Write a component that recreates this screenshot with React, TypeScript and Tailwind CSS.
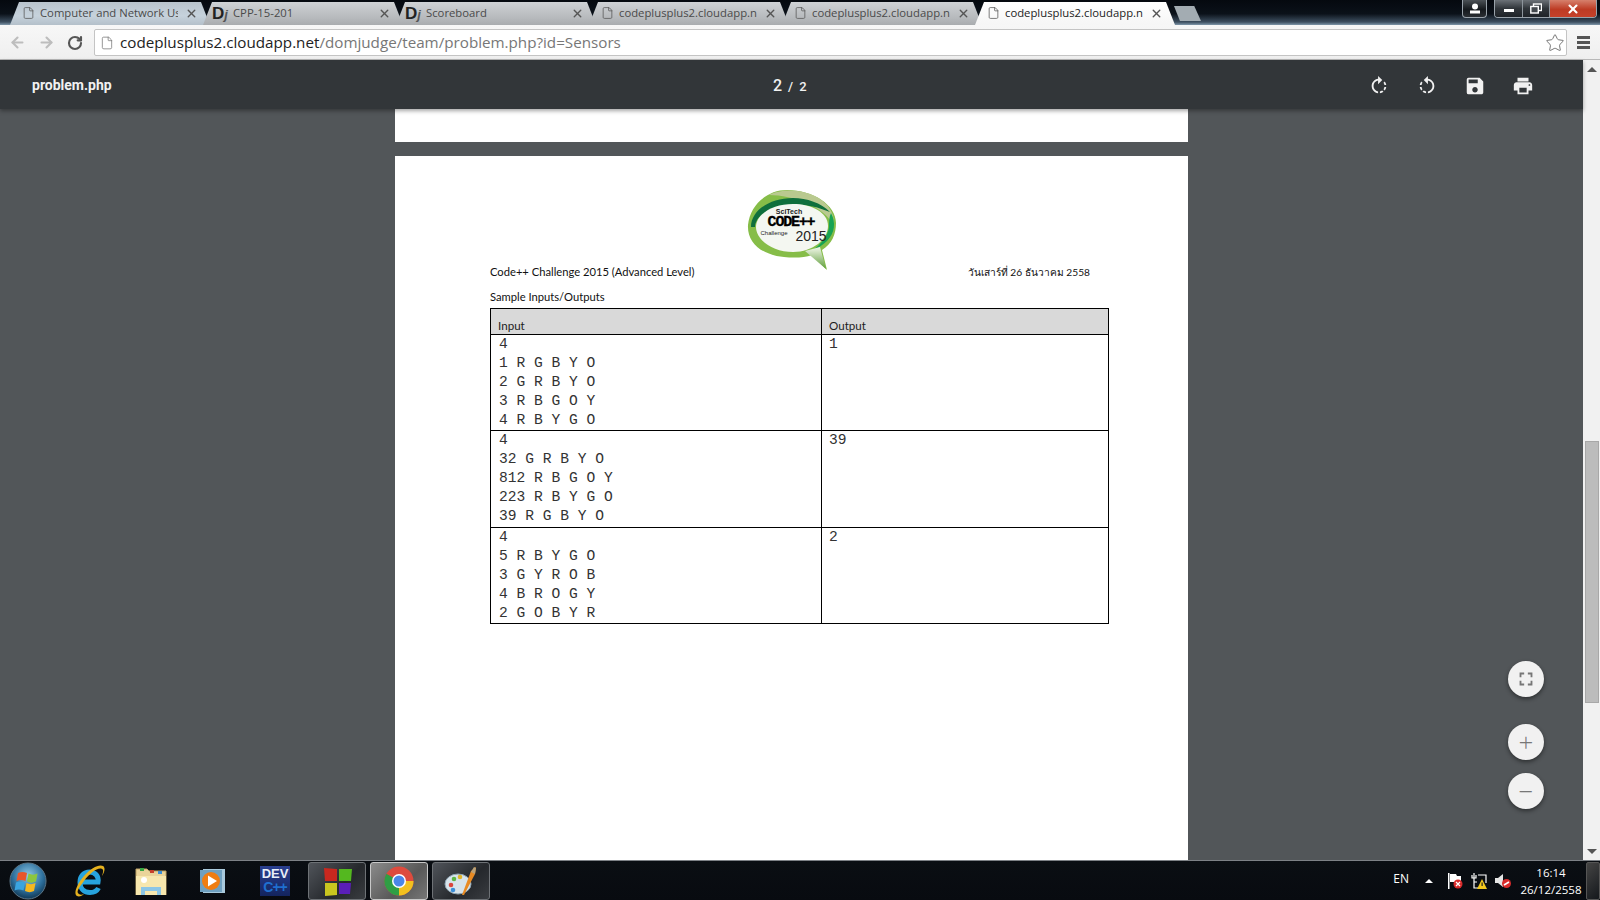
import { ArrowLeft, ArrowRight, File, RotateCw, Star, X } from "lucide-react";
import { MdFullscreen, MdPrint, MdRotateLeft, MdRotateRight, MdSave } from "react-icons/md";

const tabs = [
  { title: "Computer and Network Us", icon: "doc", state: "glass" },
  { title: "CPP-15-201", icon: "dj", state: "idle" },
  { title: "Scoreboard", icon: "dj", state: "idle" },
  { title: "codeplusplus2.cloudapp.ne", icon: "doc", state: "idle" },
  { title: "codeplusplus2.cloudapp.ne", icon: "doc", state: "idle" },
  { title: "codeplusplus2.cloudapp.ne", icon: "doc", state: "active" },
];

const samples = [
  {
    input: ["4", "1 R G B Y O", "2 G R B Y O", "3 R B G O Y", "4 R B Y G O"],
    output: "1",
    height: "h-[96px]",
  },
  {
    input: ["4", "32 G R B Y O", "812 R B G O Y", "223 R B Y G O", "39 R G B Y O"],
    output: "39",
    height: "h-[97px]",
  },
  {
    input: ["4", "5 R B Y G O", "3 G Y R O B", "4 B R O G Y", "2 G O B Y R"],
    output: "2",
    height: "h-[95px]",
  },
];

function Tab({ title, icon, state }: { title: string; icon: string; state: string }) {
  const bg =
    state === "active"
      ? "bg-[linear-gradient(#ffffff,#f6f6f6)] z-10"
      : state === "glass"
        ? "bg-[linear-gradient(#b9c4cd,#c6d2dc_60%,#b4c0ca)]"
        : "bg-[linear-gradient(#cfd2d5,#b6b9bc_70%,#a9acaf)]";
  return (
    <div
      className={`-mr-[7px] flex h-[23px] w-[200px] shrink-0 items-center pb-[1px] pl-[13px] pr-[12px] [clip-path:polygon(0_100%,9px_0,calc(100%_-_9px)_0,100%_100%)] ${bg}`}
    >
      {icon === "doc" ? (
        <File className="ml-[-1px] mr-[5px] h-[14px] w-[13px] shrink-0 text-[#555]" strokeWidth={1.4} />
      ) : (
        <span className="ml-[-4px] mr-[3px] w-[18px] shrink-0 font-['Liberation_Sans',sans-serif] text-[17px] font-bold leading-none text-[#222]">
          D<span className="text-[13px] italic text-[#555]">j</span>
        </span>
      )}
      <span
        className={`w-[138px] overflow-hidden whitespace-nowrap text-[11.3px] ${state === "active" ? "text-[#222]" : "text-[#4a4a4a]"}`}
      >
        {title}
      </span>
      <X className="ml-auto h-[13px] w-[13px] shrink-0 text-[#555]" strokeWidth={2.6} />
    </div>
  );
}

function WindowControls() {
  return (
    <div className="ml-auto flex items-start">
      <div className="flex h-[18px] w-[25px] items-center justify-center rounded-b-[4px] border border-t-0 border-[#9aa3ab] bg-[linear-gradient(#4b5156,#15191d_55%,#2a2e33)]">
        <svg width="12" height="11" viewBox="0 0 12 11">
          <circle cx="6" cy="3.5" r="3" fill="#fff" />
          <rect x="1" y="7.5" width="10" height="3" fill="#fff" />
        </svg>
      </div>
      <div className="ml-[7px] flex h-[18px] w-[103px] overflow-hidden rounded-b-[4px] border border-t-0 border-[#9aa3ab]">
        <div className="flex w-[28px] items-center justify-center border-r border-[#8d959c] bg-[linear-gradient(#6b7177,#30353a_50%,#1f2328)]">
          <div className="mt-[3px] h-[3px] w-[10px] bg-white" />
        </div>
        <div className="flex w-[27px] items-center justify-center border-r border-[#8d959c] bg-[linear-gradient(#6b7177,#30353a_50%,#1f2328)]">
          <svg width="12" height="11" viewBox="0 0 12 11" fill="none" stroke="#fff" strokeWidth="1.4">
            <rect x="3.5" y="1" width="8" height="6.5" />
            <rect x="0.8" y="3.5" width="7.5" height="6.5" fill="#43484d" />
          </svg>
        </div>
        <div className="flex flex-1 items-center justify-center bg-[linear-gradient(#d6806c,#bd3b24_55%,#c6412a)]">
          <X className="h-[14px] w-[14px] text-white" strokeWidth={3.6} />
        </div>
      </div>
    </div>
  );
}

function CodeLogo() {
  return (
    <svg width="90" height="82" viewBox="0 0 90 82" className="ml-[352px] block">
      <defs>
        <linearGradient id="bubbleTail" x1="0" y1="0" x2="0" y2="1">
          <stop offset="0%" stopColor="#f2f7ea" />
          <stop offset="100%" stopColor="#5f9e3a" />
        </linearGradient>
      </defs>
      <path d="M40 1C20 1 3 16 1 36c-1 18 14 30 36 32 9 1 20 1 28-2l15 15-5-20c10-6 14-16 14-27C89 16 66 1 40 1Z" fill="#86bd48" />
      <path d="M22 6C36-2 66 0 80 16c5 6 8 13 6 20C78 18 46 6 22 6Z" fill="#b9c98f" />
      <path d="M4 38C4 22 22 9 46 9c14 0 28 5 37 14-14-6-30-9-44-7C22 18 8 28 8 38Z" fill="#0f6f3c" />
      <path d="M84 24c5 9 4 20-4 28-4 4-9 7-14 9 8-6 15-14 16-23 0-5 0-10 2-14Z" fill="#17a354" />
      <path d="M9 38C9 25 26 15 46 15c18 0 35 8 35 22 0 13-15 26-35 26C26 63 9 51 9 38Z" fill="#f4f7f1" />
      <path d="M58 62l21 18-6-22Z" fill="url(#bubbleTail)" />
      <text x="42" y="25" textAnchor="middle" className="font-['Liberation_Sans',sans-serif] text-[7px] font-bold" fill="#222">SciTech</text>
      <text x="44" y="37" textAnchor="middle" className="font-['Liberation_Mono',monospace] text-[15px] font-bold tracking-[-1.2px]" fill="#000" stroke="#000" strokeWidth="0.3">CODE++</text>
      <text x="27" y="46" textAnchor="middle" className="font-['Liberation_Sans',sans-serif] text-[6px]" fill="#222">Challenge</text>
      <text x="64" y="52" textAnchor="middle" className="font-['Liberation_Sans',sans-serif] text-[14px]" fill="#222">2015</text>
    </svg>
  );
}

function SampleTable() {
  return (
    <div className="ml-[95px] mt-[2px] w-[619px] border border-black text-[#1d1d1d]">
      <div className="flex h-[26px] border-b border-black bg-[#d9d9d9] text-[11.6px] leading-[13px]">
        <div className="flex w-[331px] items-end border-r border-black pb-[2px] pl-[7px]">Input</div>
        <div className="flex flex-1 items-end pb-[2px] pl-[7px]">Output</div>
      </div>
      {samples.map((s, i) => (
        <div
          key={i}
          className={`flex font-['Liberation_Mono',monospace] text-[14.6px] leading-[19px] text-[#333] ${s.height} ${i < 2 ? "border-b border-black" : ""}`}
        >
          <div className="w-[331px] whitespace-pre border-r border-black pl-[8px]">
            {s.input.map((line, j) => (
              <div key={j}>{line}</div>
            ))}
          </div>
          <div className="flex-1 pl-[7px]">{s.output}</div>
        </div>
      ))}
    </div>
  );
}

function FloatButton({ children, className }: { children: React.ReactNode; className?: string }) {
  return (
    <div className={`flex h-[36px] w-[36px] items-center justify-center rounded-full bg-[#f1f1f1] text-[#777] shadow-[0_2px_4px_rgba(0,0,0,0.45)] ${className ?? ""}`}>
      {children}
    </div>
  );
}

function StartOrb() {
  return (
    <svg width="38" height="38" viewBox="0 0 38 38">
      <defs>
        <radialGradient id="orb" cx="50%" cy="35%" r="70%">
          <stop offset="0%" stopColor="#8fc8e6" />
          <stop offset="60%" stopColor="#2d6f9c" />
          <stop offset="100%" stopColor="#0b2c45" />
        </radialGradient>
      </defs>
      <circle cx="19" cy="19" r="18" fill="url(#orb)" stroke="#5d7687" />
      <path d="M9 11c3-1.500 6-1.500 9 0l-1.500 8c-3-1.500-6-1.500-9 0Z" fill="#e8552b" />
      <path d="M19.500 11.500c3 1.500 6 1.500 9 0l-1.500 8c-3 1.500-6 1.500-9 0Z" fill="#8cc63f" />
      <path d="M7 20.500c3-1.500 6-1.500 9 0l-1.500 8c-3-1.500-6-1.500-9 0Z" fill="#3aa4e0" />
      <path d="M17.500 21c3 1.500 6 1.500 9 0l-1.500 8c-3 1.500-6 1.500-9 0Z" fill="#f6b81f" />
    </svg>
  );
}

function ExplorerIcon() {
  return (
    <svg width="32" height="34" viewBox="0 0 32 34" fill="none">
      <path d="M7 18h17c1-6-3-10-8.500-10S6 12 6 18c0 7 4.500 10.500 10 10.500 4 0 7-1.500 8.500-4.500" stroke="#27a3de" strokeWidth="5" />
      <path d="M3 32C-1 30 3 20 10 12S25 0 29 2c3 2 1 7-1 10 1-4 2-6 0-7C24 3 16 9 10 17S2 28 5 30c1 1 3 1 5 0-2 2-5 3-7 2Z" fill="#e5b11f" />
    </svg>
  );
}

function FolderIcon() {
  return (
    <svg width="32" height="28" viewBox="0 0 32 28">
      <path d="M1 2h11l2 2h17v24H1Z" fill="#ead49a" stroke="#bda267" />
      <rect x="5" y="1" width="4" height="3" fill="#39a845" />
      <rect x="15" y="3" width="4" height="3" fill="#c8402c" />
      <rect x="23" y="4" width="4" height="3" fill="#3c8fd8" />
      <rect x="1" y="9" width="30" height="19" fill="#f7e7ae" />
      <path d="M6 28v-8h20v8h-4v-4H10v4Z" fill="#8cc6e6" />
      <circle cx="9" cy="13" r="3" fill="#fff" />
    </svg>
  );
}

function MediaIcon() {
  return (
    <svg width="27" height="26" viewBox="0 0 27 26">
      <rect x="4" y="1" width="22" height="24" fill="#a9c9dc" />
      <rect x="1" y="2" width="22" height="22" fill="#6fa0c0" />
      <circle cx="12" cy="13" r="9" fill="#ef7d12" />
      <path d="M9 7.500v11l9-5.500Z" fill="#fff" />
    </svg>
  );
}

function DevIcon() {
  return (
    <div className="flex h-[30px] w-[30px] flex-col items-center justify-center bg-[linear-gradient(#2a3f8f,#13245e)] font-['Liberation_Sans',sans-serif] font-bold leading-none">
      <span className="text-[13px] text-[#e8eef7]">DEV</span>
      <span className="text-[14px] tracking-[-1px] text-[#1f6fd0]">C++</span>
    </div>
  );
}

function TileIcon() {
  return (
    <svg width="30" height="30" viewBox="0 0 30 30">
      <path d="M2 2l13 1v12H3Z" fill="#c8281f" />
      <path d="M17 3h13l-1 12H17Z" fill="#54b81f" />
      <path d="M3 17h12v12l-12 1Z" fill="#c9c51f" />
      <path d="M17 17h12l-1 11H17Z" fill="#5a1fb8" />
    </svg>
  );
}

function ChromeIcon() {
  return (
    <svg width="30" height="30" viewBox="0 0 30 30">
      <circle cx="15" cy="15" r="14.500" fill="#dd4b3e" />
      <path d="M15 15 2.400 7.700A14.500 14.500 0 0 0 15 29.500Z" fill="#2f9e44" />
      <path d="M15 15h14.500A14.500 14.500 0 0 1 15 29.500Z" fill="#f2c01e" />
      <circle cx="15" cy="15" r="7" fill="#fff" />
      <circle cx="15" cy="15" r="5.500" fill="#4a86e8" />
    </svg>
  );
}

function PaletteIcon() {
  return (
    <svg width="34" height="32" viewBox="0 0 34 32">
      <ellipse cx="14" cy="19" rx="13" ry="10" fill="#d7e3ea" stroke="#8ea4b2" />
      <circle cx="7" cy="20" r="2.300" fill="#d9463c" />
      <circle cx="10" cy="14" r="2.300" fill="#5cb645" />
      <circle cx="16" cy="12" r="2.300" fill="#e0b52b" />
      <circle cx="9" cy="25" r="2.300" fill="#3b8ed8" />
      <path d="M27 6 32 2 31 9 20 30 18 30Z" fill="#e88a22" />
      <path d="M27 7l3-5 2 1-1 6Z" fill="#b9a27a" />
    </svg>
  );
}

function TaskButton({ children, active }: { children: React.ReactNode; active?: boolean }) {
  return (
    <div
      className={`flex h-[38px] w-[58px] items-center justify-center rounded-[3px] border ${
        active
          ? "border-[#c8c8c8] bg-[linear-gradient(135deg,#8b8b8b,#585858_60%,#777)]"
          : "border-[#6e7276] bg-[linear-gradient(135deg,#50545a,#25282c_60%,#393c40)]"
      }`}
    >
      {children}
    </div>
  );
}

function TrayIcons() {
  return (
    <div className="flex items-center gap-[8px]">
      <svg width="16" height="16" viewBox="0 0 16 16">
        <rect x="1" y="0" width="1.500" height="16" fill="#fff" />
        <path d="M3 1h6l1 2h4v6H3Z" fill="#fff" />
        <circle cx="11" cy="11" r="4.500" fill="#d92b2b" />
        <path d="M9 9l4 4m0-4-4 4" stroke="#fff" strokeWidth="1.300" />
      </svg>
      <svg width="16" height="16" viewBox="0 0 16 16" fill="none">
        <path d="M3 0v5M1 2v3h4V2M3 5v10h6M3 9h3M7 2h8v8" stroke="#fff" strokeWidth="1.200" />
        <path d="M11 6l5 10H6Z" fill="#f2c81e" />
        <rect x="10.500" y="9.500" width="1.200" height="3.500" fill="#222" />
      </svg>
      <svg width="16" height="16" viewBox="0 0 16 16">
        <path d="M0 5h3l5-4v13l-5-4H0Z" fill="#e5e5e5" />
        <circle cx="11.500" cy="10.500" r="4.500" fill="#d92b2b" />
        <path d="M9 12l5-3" stroke="#fff" strokeWidth="1.600" />
      </svg>
    </div>
  );
}

export default function App() {
  return (
    <div className="flex h-[900px] w-[1600px] flex-col overflow-hidden font-['Open_Sans',sans-serif]">
      <div className="flex h-[25px] shrink-0 items-end bg-[linear-gradient(#05090f,#0b1119_55%,#3d4f60_88%,#7f97aa)] pl-[10px]">
        <div className="flex">
          {tabs.map((t, i) => (
            <Tab key={i} title={t.title} icon={t.icon} state={t.state} />
          ))}
          <div className="ml-[6px] h-[15px] w-[27px] self-center bg-[#a3acb2] [clip-path:polygon(0_0,75%_0,100%_100%,22%_100%)]" />
        </div>
        <div className="flex h-full flex-1 items-start pr-[3px]">
          <WindowControls />
        </div>
      </div>

      <div className="flex h-[35px] shrink-0 items-center border-b border-[#b8b8b8] bg-[linear-gradient(#f7f7f7,#efefef)] pt-[1px]">
        <ArrowLeft className="ml-[9px] h-[17px] w-[17px] text-[#bdbdbd]" strokeWidth={3} />
        <ArrowRight className="ml-[12px] h-[17px] w-[17px] text-[#bdbdbd]" strokeWidth={3} />
        <RotateCw className="ml-[12px] h-[16px] w-[16px] text-[#555]" strokeWidth={3.2} />
        <div className="ml-[11px] flex h-[27px] w-[1473px] items-center rounded-[2px] border border-[#c4c4c4] bg-white pl-[5px] pr-[1px]">
          <File className="mr-[6px] h-[16px] w-[14px] text-[#777]" strokeWidth={1.3} />
          <span className="text-[15.2px] text-[#222]">codeplusplus2.cloudapp.net</span>
          <span className="text-[15.2px] text-[#777]">/domjudge/team/problem.php?id=Sensors</span>
          <Star className="ml-auto h-[20px] w-[20px] text-[#777]" strokeWidth={1.2} />
        </div>
        <div className="ml-[10px] flex w-[13px] flex-col gap-[2px]">
          <div className="h-[3px] bg-[#555]" />
          <div className="h-[3px] bg-[#555]" />
          <div className="h-[3px] bg-[#555]" />
        </div>
      </div>

      <div className="flex min-h-0 flex-1">
        <div className="relative flex min-w-0 flex-1 flex-col">
          <div className="z-10 flex h-[49px] shrink-0 items-center bg-[#323639] pl-[32px] pr-[49px] pt-[3px] text-[#f1f1f1] shadow-[0_2px_4px_rgba(0,0,0,0.35)]">
            <span className="-mt-[2px] w-[741px] font-['Roboto',sans-serif] text-[14px] font-bold">problem.php</span>
            <div className="flex items-baseline font-['Roboto',sans-serif]">
              <span className="text-[16px] font-medium">2</span>
              <span className="ml-[6px] text-[13px] font-medium">/</span>
              <span className="ml-[6px] text-[13px] font-medium">2</span>
            </div>
            <div className="ml-auto flex items-center gap-[26px] text-[#f1f1f1]">
              <MdRotateRight className="h-[22px] w-[22px]" />
              <MdRotateLeft className="h-[22px] w-[22px]" />
              <MdSave className="h-[22px] w-[22px]" />
              <MdPrint className="h-[22px] w-[22px]" />
            </div>
          </div>

          <div className="relative flex min-h-0 flex-1 flex-col items-center gap-[14px] overflow-hidden bg-[#525659]">
            <div className="h-[33px] w-[793px] shrink-0 bg-white" />
            <div className="w-[793px] flex-1 bg-white pt-[33px] font-['Lato',sans-serif] text-[11.2px] text-[#111]">
              <CodeLogo />
              <div className="-mt-[8px] flex w-[695px] justify-between pl-[95px] leading-[18px]">
                <span>Code++ Challenge 2015 (Advanced Level)</span>
                <span className="text-[10.2px]">วันเสาร์ที่ 26 ธันวาคม 2558</span>
              </div>
              <div className="ml-[95px] mt-[7px] leading-[18px]">Sample Inputs/Outputs</div>
              <SampleTable />
            </div>
            <div className="absolute right-[39px] top-[552px] flex flex-col">
              <FloatButton>
                <MdFullscreen className="h-[22px] w-[22px]" />
              </FloatButton>
              <FloatButton className="mt-[27px]">
                <span className="text-[26px] font-light leading-none">+</span>
              </FloatButton>
              <FloatButton className="mt-[13px]">
                <span className="text-[26px] font-light leading-none">−</span>
              </FloatButton>
            </div>
          </div>
        </div>

        <div className="flex w-[17px] shrink-0 flex-col items-center bg-[#f1f1f1]">
          <div className="mt-[7px] h-0 w-0 border-x-[5px] border-b-[5px] border-x-transparent border-b-[#555]" />
          <div className="mt-[369px] h-[262px] w-[14px] border border-[#a8a8a8] bg-[#bcbcbc]" />
          <div className="mb-[6px] mt-auto h-0 w-0 border-x-[5px] border-t-[5px] border-x-transparent border-t-[#555]" />
        </div>
      </div>

      <div className="flex h-[40px] shrink-0 items-center border-t border-[#7d8186] bg-[linear-gradient(#0a0e13,#080b10)] text-white">
        <div className="ml-[9px] w-[51px]">
          <StartOrb />
        </div>
        <div className="flex w-[60px] justify-center"><ExplorerIcon /></div>
        <div className="flex w-[62px] justify-center"><FolderIcon /></div>
        <div className="flex w-[60px] justify-center"><MediaIcon /></div>
        <div className="flex w-[66px] justify-center"><DevIcon /></div>
        <div className="flex gap-[4px]">
          <TaskButton><TileIcon /></TaskButton>
          <TaskButton active><ChromeIcon /></TaskButton>
          <TaskButton><PaletteIcon /></TaskButton>
        </div>
        <div className="ml-auto flex items-center">
          <span className="-mt-[4px] text-[12px]">EN</span>
          <div className="ml-[16px] h-0 w-0 border-x-[4px] border-b-[4px] border-x-transparent border-b-white" />
          <div className="ml-[14px]"><TrayIcons /></div>
          <div className="ml-[9px] w-[62px] text-center text-[11.5px] leading-[17px]">
            <div>16:14</div>
            <div>26/12/2558</div>
          </div>
          <div className="ml-[4px] h-[38px] w-[14px] rounded-[2px] border border-[#555] bg-[linear-gradient(135deg,#444,#15181c)]" />
        </div>
      </div>
    </div>
  );
}
